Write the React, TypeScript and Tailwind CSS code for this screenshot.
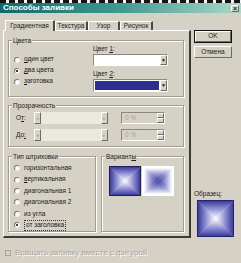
import React from 'react';

const sunken = 'border border-t-[#8a877f] border-l-[#8a877f] border-b-white border-r-white';
const raised = 'border border-t-white border-l-white border-b-[#6f6c66] border-r-[#6f6c66]';

const BoxGradient: React.FC<{ id: string; edge: string; mid: string; center: string; className?: string }> = ({ id, edge, mid, center, className }) => {
    const sides = [
        { k: 't', x1: 50, y1: 0, x2: 50, y2: 50, pts: '0,0 100,0 50,50' },
        { k: 'b', x1: 50, y1: 100, x2: 50, y2: 50, pts: '0,100 100,100 50,50' },
        { k: 'l', x1: 0, y1: 50, x2: 50, y2: 50, pts: '0,0 0,100 50,50' },
        { k: 'r', x1: 100, y1: 50, x2: 50, y2: 50, pts: '100,0 100,100 50,50' },
    ];
    return (
        <svg viewBox="0 0 100 100" preserveAspectRatio="none" className={className}>
            <defs>
                {sides.map((s) => (
                    <linearGradient key={s.k} id={id + s.k} x1={s.x1} y1={s.y1} x2={s.x2} y2={s.y2} gradientUnits="userSpaceOnUse">
                        <stop offset="0" stopColor={edge} />
                        <stop offset="0.45" stopColor={mid} />
                        <stop offset="1" stopColor={center} />
                    </linearGradient>
                ))}
            </defs>
            {sides.map((s) => (
                <polygon key={s.k} points={s.pts} fill={`url(#${id + s.k})`} stroke={`url(#${id + s.k})`} strokeWidth="0.6" />
            ))}
        </svg>
    );
};

const Radio: React.FC<{ label: React.ReactNode; checked?: boolean; focus?: boolean; h: string }> = ({ label, checked, focus, h }) => (
    <div className={`flex items-center ${h}`}>
        <span className="w-[6px] h-[6px] rounded-full bg-white border border-t-[#7c7972] border-l-[#7c7972] border-b-[#efece6] border-r-[#efece6] flex items-center justify-center">
            {checked && <span className="w-[2px] h-[2px] rounded-full bg-black" />}
        </span>
        <span className={`ml-[4px] ${focus ? 'border border-dotted border-[#333] px-[1px] py-[1px]' : ''}`}>{label}</span>
    </div>
);

const Group: React.FC<{ title: React.ReactNode; className: string; children: React.ReactNode }> = ({ title, className, children }) => (
    <div className={`relative border border-[#a19d94] shadow-[inset_1px_1px_0_#fff,1px_1px_0_#fff] ${className}`}>
        <span className="absolute -top-[4px] left-[3px] bg-[#d6d1c5] px-[1px] leading-[7px]">{title}</span>
        {children}
    </div>
);

const ArrowBtn: React.FC<{ dir: 'l' | 'r' }> = ({ dir }) => (
    <span className={`w-[7px] h-full ${raised} flex items-center justify-center text-[#a9a59c] text-[5px]`}>{dir === 'l' ? '◂' : '▸'}</span>
);

const SliderRow: React.FC<{ label: React.ReactNode }> = ({ label }) => (
    <div className="flex items-center h-[12px]">
        <span className="w-[25px] pl-[7px]">{label}</span>
        <div className="flex w-[74px] h-[12px]">
            <ArrowBtn dir="l" />
            <span className="flex-1 bg-[#ebe8e0]" />
            <ArrowBtn dir="r" />
        </div>
        <div className={`ml-[13px] w-[44px] h-[12px] ${sunken} flex bg-[#d6d1c5]`}>
            <span className="flex-1 pl-[3px] text-[#a9a59c] leading-[10px]">0 %</span>
            <span className="w-[7px] flex flex-col">
                <span className={`flex-1 ${raised}`} />
                <span className={`flex-1 ${raised}`} />
            </span>
        </div>
    </div>
);

const Tab: React.FC<{ label: string; active?: boolean; w: string }> = ({ label, active, w }) => (
    <div
        className={`${w} flex items-center justify-center border-l border-t border-r-2 border-l-white border-t-white border-r-[#4a4844] rounded-t-[1px] ${
            active ? 'h-[11px] relative top-[1px] bg-[#d6d1c5] z-10' : 'h-[9px]'
        }`}
    >
        {label}
    </div>
);

export default function App() {
    return (
        <div className="w-[241px] h-[263px] bg-[#d6d1c5] flex flex-col overflow-hidden text-[6.5px] leading-none text-[#1b1b1b] font-['Liberation_Sans',Arial,sans-serif]">
            <div className="h-[3px] bg-[repeating-linear-gradient(90deg,#151515_0_6px,#f4f4f4_6px_9px)]" />
            <div className="h-[10px] flex items-center justify-between pl-[3px] pr-[2px] bg-gradient-to-r from-[#0d6a6c] via-[#3f9a92] to-[#a8d9c9]">
                <span className="text-white font-bold text-[8px]">Способы заливки</span>
                <span className={`w-[8px] h-[7px] bg-[#d6d1c5] ${raised} flex items-center justify-center text-[7px] font-bold leading-none`}>×</span>
            </div>

            <div className="flex pl-[3px] pt-[7px]">
                <div className="w-[188px] flex flex-col">
                    <div className="flex items-end h-[10px] pl-[2px]">
                        <Tab label="Градиентная" active w="w-[50px]" />
                        <Tab label="Текстура" w="w-[33px]" />
                        <Tab label="Узор" w="w-[32px]" />
                        <Tab label="Рисунок" w="w-[33px]" />
                    </div>
                    <div className="h-[208px] border border-l-white border-t-white border-r-2 border-b-2 border-r-[#3c3a36] border-b-[#3c3a36] pl-[4px] pt-[9px] flex flex-col">
                        <Group title="Цвета" className="w-[176px] h-[57px] flex pl-[5px]">
                            <div className="w-[79px] pt-[13px] flex flex-col">
                                <Radio h="h-[11px]" label={<><u>о</u>дин цвет</>} />
                                <Radio h="h-[11px]" checked label={<><u>д</u>ва цвета</>} />
                                <Radio h="h-[11px]" label={<><u>з</u>аготовка</>} />
                            </div>
                            <div className="pt-[4px] flex flex-col">
                                <span className="h-[8px] leading-[8px]">Цвет <u>1</u>:</span>
                                <div className={`mt-[1px] w-[75px] h-[12px] bg-white ${sunken} flex justify-end`}>
                                    <span className={`w-[7px] h-full bg-[#d6d1c5] ${raised} flex items-center justify-center text-[5px]`}>▼</span>
                                </div>
                                <span className="mt-[4px] h-[8px] leading-[8px]">Цвет <u>2</u>:</span>
                                <div className={`mt-[1px] w-[75px] h-[13px] bg-white ${sunken} flex`}>
                                    <span className="flex-1 m-[1px] bg-[#2d2f8e]" />
                                    <span className={`w-[7px] h-full bg-[#d6d1c5] ${raised} flex items-center justify-center text-[5px]`}>▼</span>
                                </div>
                            </div>
                        </Group>

                        <Group title="Прозрачность" className="mt-[8px] w-[176px] h-[42px] flex flex-col pt-[6px] gap-[5px]">
                            <SliderRow label={<>О<u>т</u>:</>} />
                            <SliderRow label={<>До<u>:</u></>} />
                        </Group>

                        <div className="mt-[9px] flex gap-[5px]">
                            <Group title="Тип штриховки" className="w-[88px] h-[76px] pl-[5px] pt-[5.5px] flex flex-col">
                                <Radio h="h-[11.5px]" label="горизонтальная" />
                                <Radio h="h-[11.5px]" label={<><u>в</u>ертикальная</>} />
                                <Radio h="h-[11.5px]" label="диагональная 1" />
                                <Radio h="h-[11.5px]" label="диагональная 2" />
                                <Radio h="h-[11.5px]" label="из угла" />
                                <Radio h="h-[11.5px]" checked focus label="от заголовка" />
                            </Group>
                            <Group title={<>Вариант<u>ы</u></>} className="w-[83px] h-[76px] pl-[7px] pt-[9px] flex gap-[1px] items-start">
                                <div className="w-[32px] h-[30px] border border-[#1e1e5a]">
                                    <BoxGradient id="v1" edge="#3a3b9c" mid="#8f90d2" center="#ffffff" className="w-full h-full block" />
                                </div>
                                <div className="w-[32px] h-[30px] bg-white p-[2px]">
                                    <BoxGradient id="v2" edge="#ffffff" mid="#9a9bd6" center="#3b3c9e" className="w-full h-full block" />
                                </div>
                            </Group>
                        </div>
                    </div>
                </div>

                <div className="ml-[3px] w-[40px] flex flex-col pt-[10px]">
                    <div className="w-[38px] h-[13px] border border-[#111] flex">
                        <span className={`flex-1 ${raised} flex items-center justify-center`}>OK</span>
                    </div>
                    <div className={`mt-[3px] w-[38px] h-[12px] ${raised} flex items-center justify-center`}>Отмена</div>
                    <div className="flex-1" />
                    <span className="h-[8px] leading-[8px]">Образец:</span>
                    <div className="mt-[2px] ml-[3px] w-[37px] h-[37px] border border-[#22236a] mb-[1px]">
                        <BoxGradient id="s1" edge="#3a3b9c" mid="#8f90d2" center="#ffffff" className="w-full h-full block" />
                    </div>
                </div>
            </div>

            <div className="mt-[11px] flex items-center pl-[5px] h-[8px]">
                <span className="w-[6px] h-[6px] border border-[#a9a59c]" />
                <span className="ml-[4px] text-[8px] text-[#a9a59c] [text-shadow:1px_1px_0_#fff]">Вращать заливку вместе с фигурой</span>
            </div>
        </div>
    );
}
